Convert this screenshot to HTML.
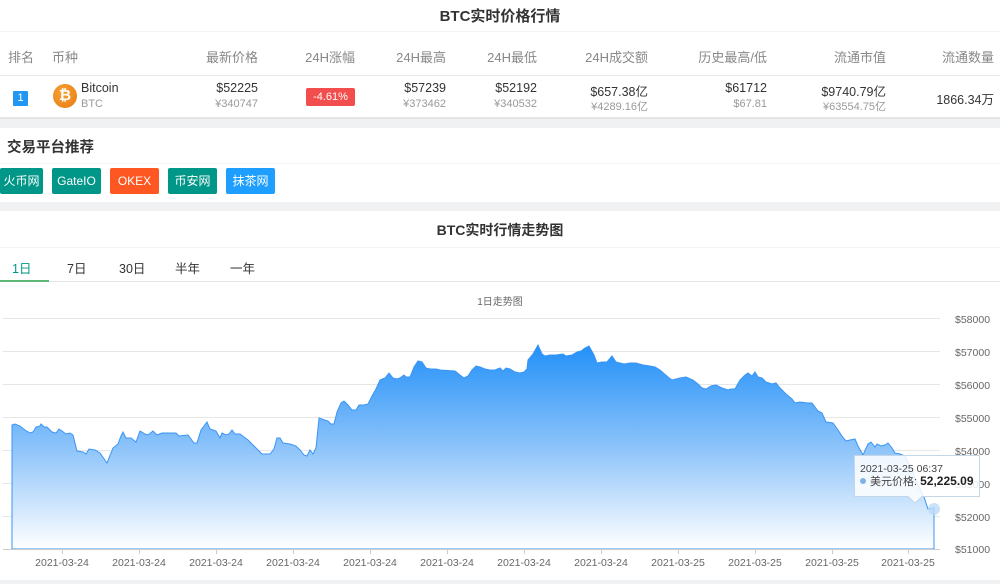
<!DOCTYPE html>
<html><head><meta charset="utf-8"><style>
*{margin:0;padding:0;box-sizing:border-box}
body{width:1000px;height:584px;overflow:hidden;background:#fff;font-family:"Liberation Sans","Noto Sans CJK SC",sans-serif;color:#333;position:relative}
.abs{position:absolute}
.t{position:absolute;white-space:nowrap}
.r{text-align:right}
.gray{background:#f0f1f3}
.hdr{font-size:13px;color:#888;top:47px}
.v1{font-size:12.5px;color:#333;top:81px}
.v2{font-size:11px;color:#999;top:98px}
.btn{position:absolute;top:168px;height:26px;line-height:26px;color:#fff;font-size:12px;text-align:center;border-radius:2px}
</style></head><body>
<div class="t" style="left:0;width:1000px;text-align:center;top:5px;font-size:15px;font-weight:bold;color:#333">BTC实时价格行情</div>
<div class="abs" style="left:0;top:31px;width:1000px;height:1px;background:#f3f3f3"></div>
<div class="abs" style="left:0;top:75px;width:1000px;height:1px;background:#e8e8e8"></div>
<div class="abs" style="left:0;top:117px;width:1000px;height:2px;background:#e4e4e4"></div>
<div class="abs gray" style="left:0;top:119px;width:1000px;height:9px"></div>
<div class="t hdr" style="left:8px">排名</div>
<div class="t hdr" style="left:52px">币种</div>
<div class="t hdr r" style="right:742px">最新价格</div>
<div class="t hdr r" style="right:645px">24H涨幅</div>
<div class="t hdr r" style="right:554px">24H最高</div>
<div class="t hdr r" style="right:463px">24H最低</div>
<div class="t hdr r" style="right:352px">24H成交额</div>
<div class="t hdr r" style="right:233px">历史最高/低</div>
<div class="t hdr r" style="right:114px">流通市值</div>
<div class="t hdr r" style="right:6px">流通数量</div>
<div class="abs" style="left:13px;top:91px;width:15px;height:15px;background:#2196f3;color:#fff;font-size:11px;text-align:center;line-height:15px;border-radius:1px">1</div>
<div class="abs" style="left:53px;top:84px;width:24px;height:24px;border-radius:50%;background:radial-gradient(circle at 40% 35%,#f7a334,#e8780f);color:#fff;font-weight:bold;font-size:15px;text-align:center;line-height:24px">₿</div>
<div class="t" style="left:81px;top:81px;font-size:12.5px">Bitcoin</div>
<div class="t" style="left:81px;top:98px;font-size:11px;color:#999">BTC</div>
<div class="t v1 r" style="right:742px">$52225</div><div class="t v2 r" style="right:742px">¥340747</div>
<div class="abs" style="left:306px;top:88px;width:49px;height:18px;background:#f24e4e;border-radius:2px;color:#fff;font-size:11px;text-align:center;line-height:18px">-4.61%</div>
<div class="t v1 r" style="right:554px">$57239</div><div class="t v2 r" style="right:554px">¥373462</div>
<div class="t v1 r" style="right:463px">$52192</div><div class="t v2 r" style="right:463px">¥340532</div>
<div class="t v1 r" style="right:352px">$657.38亿</div><div class="t v2 r" style="right:352px">¥4289.16亿</div>
<div class="t v1 r" style="right:233px">$61712</div><div class="t v2 r" style="right:233px">$67.81</div>
<div class="t v1 r" style="right:114px">$9740.79亿</div><div class="t v2 r" style="right:114px">¥63554.75亿</div>
<div class="t r" style="right:6px;top:89px;font-size:12.5px">1866.34万</div>

<div class="t" style="left:7px;top:136px;font-size:14.5px;font-weight:bold;color:#333">交易平台推荐</div>
<div class="abs" style="left:0;top:163px;width:1000px;height:1px;background:#f3f3f3"></div>
<div class="btn" style="left:0;width:43px;background:#009688">火币网</div>
<div class="btn" style="left:52px;width:49px;background:#009688">GateIO</div>
<div class="btn" style="left:110px;width:49px;background:#ff5722">OKEX</div>
<div class="btn" style="left:168px;width:49px;background:#009688">币安网</div>
<div class="btn" style="left:226px;width:49px;background:#1e9fff">抹茶网</div>
<div class="abs gray" style="left:0;top:202px;width:1000px;height:9px"></div>

<div class="t" style="left:0;width:1000px;text-align:center;top:220px;font-size:14px;font-weight:bold;color:#333">BTC实时行情走势图</div>
<div class="abs" style="left:0;top:247px;width:1000px;height:1px;background:#f3f3f3"></div>
<div class="t" style="left:12px;top:258px;font-size:12.5px;color:#009688">1日</div>
<div class="t" style="left:67px;top:258px;font-size:12.5px">7日</div>
<div class="t" style="left:119px;top:258px;font-size:12.5px">30日</div>
<div class="t" style="left:175px;top:258px;font-size:12.5px">半年</div>
<div class="t" style="left:230px;top:258px;font-size:12.5px">一年</div>
<div class="abs" style="left:0;top:281px;width:1000px;height:1px;background:#e6e6e6"></div>
<div class="abs" style="left:0;top:280px;width:49px;height:2px;background:#5fb878"></div>
<div class="t" style="left:0;width:1000px;text-align:center;top:293px;font-size:10px;color:#666">1日走势图</div>

<svg class="abs" style="left:0;top:300px" width="1000" height="284" viewBox="0 300 1000 284">
<defs><linearGradient id="g" x1="0" y1="0" x2="0" y2="1"><stop offset="0" stop-color="#2290f8"/><stop offset="0.5" stop-color="#8cc3fa"/><stop offset="1" stop-color="#ffffff"/></linearGradient></defs>
<g stroke="#e6e6e6" stroke-width="1">
<line x1="3" x2="940" y1="318.5" y2="318.5"/><line x1="3" x2="940" y1="351.5" y2="351.5"/><line x1="3" x2="940" y1="384.5" y2="384.5"/><line x1="3" x2="940" y1="417.5" y2="417.5"/><line x1="3" x2="940" y1="450.5" y2="450.5"/><line x1="3" x2="940" y1="483.5" y2="483.5"/><line x1="3" x2="940" y1="516.5" y2="516.5"/>
</g>
<path fill="url(#g)" stroke="#3a95f5" stroke-width="1" d="M12,549 L12,425 15,424 20,426 25,430 30,433 33,432 36,427 40,426 41,424 44,427 47,427 52,432 56,433 59,429 62,431 66,434 70,433 73,435 77,451 83,452 86,454 89,449 95,450 100,453 107,463 113,448 118,444 121,436 123,432 126,438 131,438 136,442 140,431 145,434 148,435 153,431 157,435 162,433 176,433 179,436 188,435 194,443 197,443 201,430 207,422 210,429 216,431 220,438 222,433 226,435 229,434 232,430 235,434 240,434 248,440 255,447 262,454 270,454 274,449 277,438 280,438 283,443 290,444 296,446 300,450 304,455 307,456 310,450 313,454 316,448 319,418 328,421 331,424 334,424 337,412 341,403 344,401 348,405 352,410 356,410 359,405 364,405 368,404 372,396 376,389 380,380 385,378 389,373 393,378 397,379 400,378 404,375 406,377 410,377 414,367 418,361 422,362 426,368 430,369 436,369 440,370 455,371 460,375 464,378 468,376 472,370 476,366 480,367 485,369 490,370 495,370 500,368 503,371 506,368 510,369 515,372 520,373 524,372 527,369 528,360 533,354 538,345 542,354 545,356 550,355 556,355 563,354 566,356 572,355 577,352 581,351 585,348 589,346 594,355 597,363 602,362 607,362 612,356 616,362 624,364 630,363 636,363 643,365 650,366 655,367 660,370 668,377 672,380 680,378 686,377 693,380 698,384 702,388 706,389 711,386 716,385 722,388 728,390 731,389 735,389 740,380 745,375 748,373 752,376 755,372 758,377 762,378 766,382 772,384 776,383 780,388 786,394 792,399 795,403 800,402 808,403 812,403 818,411 822,413 826,422 833,423 838,430 842,436 846,441 850,440 855,439 858,446 863,455 868,444 871,442 875,447 877,444 881,446 885,445 888,443 892,448 895,453 900,454 905,456 912,470 918,485 924,497 928,509 934,508 L934,549 Z"/>
<line x1="3" x2="940" y1="549.5" y2="549.5" stroke="#ccc"/>
<g stroke="#ccc"><line x1="62.5" x2="62.5" y1="549" y2="554"/><line x1="139.5" x2="139.5" y1="549" y2="554"/><line x1="216.5" x2="216.5" y1="549" y2="554"/><line x1="293.5" x2="293.5" y1="549" y2="554"/><line x1="370.5" x2="370.5" y1="549" y2="554"/><line x1="447.5" x2="447.5" y1="549" y2="554"/><line x1="524.5" x2="524.5" y1="549" y2="554"/><line x1="601.5" x2="601.5" y1="549" y2="554"/><line x1="678.5" x2="678.5" y1="549" y2="554"/><line x1="755.5" x2="755.5" y1="549" y2="554"/><line x1="832.5" x2="832.5" y1="549" y2="554"/><line x1="908.5" x2="908.5" y1="549" y2="554"/></g>
<g font-family="Liberation Sans,sans-serif" font-size="10.5" fill="#666" text-anchor="middle">
<text x="62" y="566">2021-03-24</text><text x="139" y="566">2021-03-24</text><text x="216" y="566">2021-03-24</text><text x="293" y="566">2021-03-24</text><text x="370" y="566">2021-03-24</text><text x="447" y="566">2021-03-24</text><text x="524" y="566">2021-03-24</text><text x="601" y="566">2021-03-24</text><text x="678" y="566">2021-03-25</text><text x="755" y="566">2021-03-25</text><text x="832" y="566">2021-03-25</text><text x="908" y="566">2021-03-25</text>
</g>
<g font-family="Liberation Sans,sans-serif" font-size="10.5" fill="#666">
<text x="955" y="323">$58000</text><text x="955" y="356">$57000</text><text x="955" y="389">$56000</text><text x="955" y="422">$55000</text><text x="955" y="455">$54000</text><text x="955" y="488">$53000</text><text x="955" y="521">$52000</text><text x="955" y="553">$51000</text>
</g>
<circle cx="934" cy="509" r="6" fill="#bcd9f7" opacity="0.8"/>
<path d="M854.5,455.5 H979.5 V496.5 H922 L915,503 L908,496.5 H854.5 Z" fill="rgba(255,255,255,0.85)" stroke="#c5d6e6"/>
<text x="860" y="472" font-family="Liberation Sans,sans-serif" font-size="10.5" fill="#444">2021-03-25 06:37</text>
<circle cx="863" cy="481" r="3" fill="#7fb2ea"/>
<text x="870" y="485" font-family="Liberation Sans,'Noto Sans CJK SC',sans-serif" font-size="11" fill="#444">美元价格: <tspan font-weight="bold" font-size="12" fill="#222">52,225.09</tspan></text>
</svg>
<div class="abs gray" style="left:0;top:580px;width:1000px;height:4px"></div>
</body></html>
